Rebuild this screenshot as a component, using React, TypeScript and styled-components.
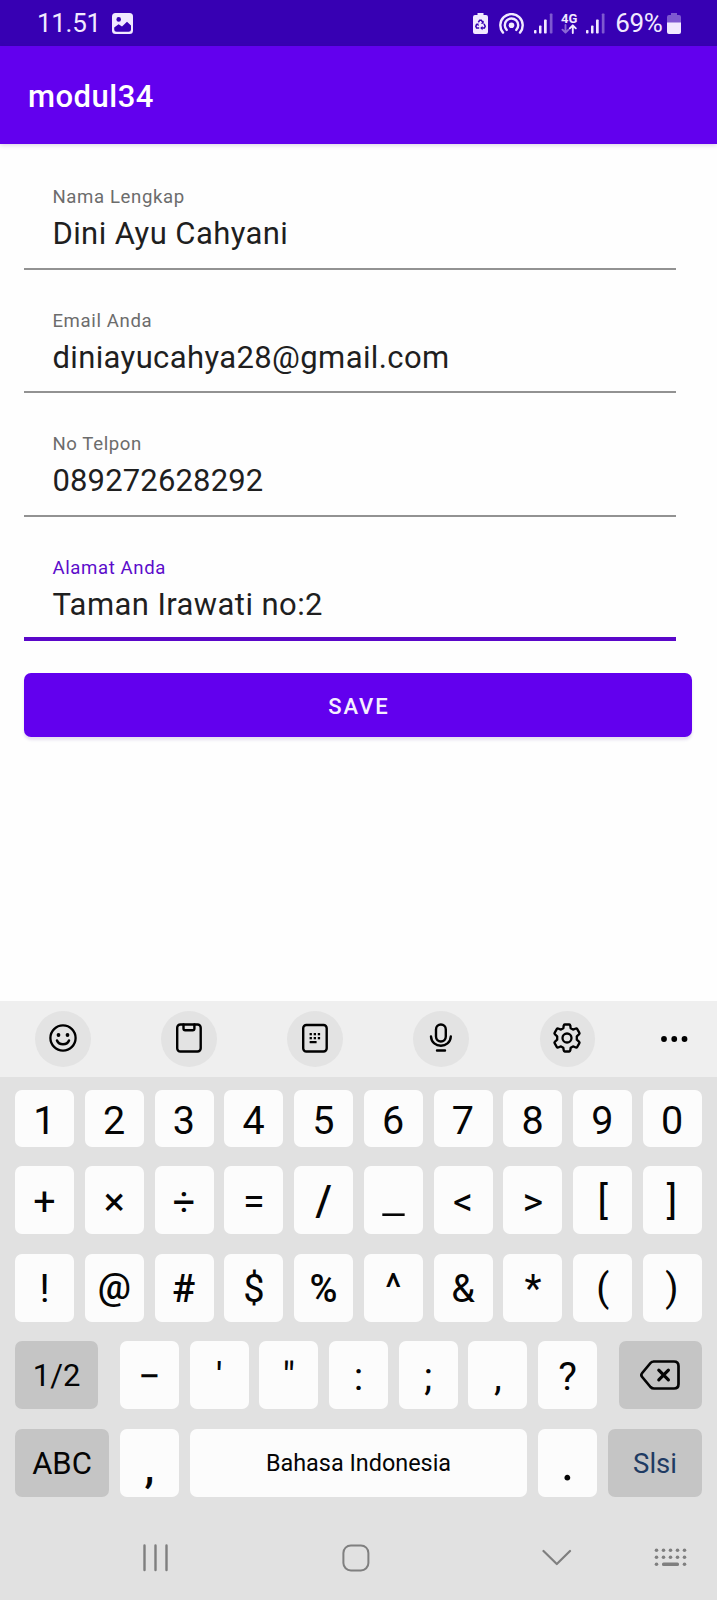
import React from "react";
import styled, { createGlobalStyle } from "styled-components";

const GlobalStyle = createGlobalStyle`
  * { box-sizing: border-box; }
  body { margin: 0; background: #fff; font-family: Roboto, "Liberation Sans", sans-serif; }
`;

const Screen = styled.div`
  width: 717px;
  height: 1600px;
  display: flex;
  flex-direction: column;
  overflow: hidden;
  background: #fefefe;
`;

const StatusBar = styled.header`
  height: 46px;
  flex: none;
  display: flex;
  align-items: center;
  padding: 0 36px 0 37px;
  background: #3700b3;
  color: #f1e9ff;

  svg { display: block; flex: none; }
`;

const StatusText = styled.span<{ $spacing?: number }>`
  font-size: 26px;
  line-height: 46px;
  letter-spacing: ${(p) => p.$spacing ?? 0}px;
  white-space: nowrap;
`;

const StatusIcons = styled.div`
  margin-left: auto;
  display: flex;
  align-items: center;
`;

const Network = styled.div`
  width: 18px;
  margin: 0 8px 0 7px;
  display: flex;
  flex-direction: column;
  align-items: center;
  font-size: 13px;
  font-weight: 700;
  line-height: 11px;
`;

const AppBar = styled.div`
  height: 98px;
  flex: none;
  padding-left: 28px;
  background: #6200ee;
  color: #fff;
  box-shadow: 0 1px 5px rgba(60, 0, 120, 0.2);
  font-size: 31px;
  font-weight: 500;
  line-height: 102px;
  letter-spacing: 0.5px;
`;

const Form = styled.main`
  flex: 1;
  padding: 0 24.4px;
`;

const Field = styled.label<{ $active?: boolean }>`
  display: flex;
  flex-direction: column;
  width: 652px;
  height: 123.4px;
  padding: 42.4px 28px 0;
  position: relative;
  color: ${(p) => (p.$active ? "#5c0ccb" : "#6c6c6c")};

  &::after {
    content: "";
    position: absolute;
    left: 0;
    right: 0;
    top: ${(p) => (p.$active ? 122.8 : 123.8)}px;
    height: ${(p) => (p.$active ? 3.6 : 2)}px;
    background: ${(p) => (p.$active ? "#5a07c9" : "#929292")};
  }
`;

const FieldLabel = styled.span`
  font-size: 18.6px;
  line-height: 22px;
  letter-spacing: 0.62px;
`;

const FieldValue = styled.span<{ $spacing: number }>`
  margin-top: 2px;
  font-size: 31px;
  line-height: 48px;
  letter-spacing: ${(p) => p.$spacing}px;
  color: #1f1f1f;
  white-space: nowrap;
`;

const SaveButton = styled.button`
  display: block;
  width: 668px;
  height: 64px;
  margin-top: 35.4px;
  padding: 3px 0 0 1px;
  border: 0;
  border-radius: 7px;
  background: #6200ee;
  box-shadow: 0 3px 3px rgba(60, 0, 130, 0.12);
  color: #f5eeff;
  font: 500 22px/62px Roboto, sans-serif;
  letter-spacing: 1.9px;
`;

const Keyboard = styled.section`
  flex: none;
  height: 599px;
  background: #e1e1e1;
`;

const Toolbar = styled.div`
  height: 76px;
  display: flex;
  align-items: center;
  padding: 0 29px 1px 35px;
  background: #efefef;
`;

const Tool = styled.span`
  width: 56px;
  height: 56px;
  margin-right: 70.3px;
  padding-bottom: 1px;
  display: grid;
  place-items: center;
  border-radius: 50%;
  background: #e3e3e3;
`;

const Keys = styled.div`
  padding: 13px 15px 0;
  display: flex;
  flex-direction: column;
  gap: 19.6px;
`;

const KeyRow = styled.div<{ $short?: boolean }>`
  display: flex;
  justify-content: space-between;
  height: ${(p) => (p.$short ? 56.6 : 68)}px;
`;

const KeyGroup = styled.div`
  display: flex;
  gap: 10.6px;
`;

const Key = styled.span<{ $w?: number; $dark?: boolean; $size?: number; $drop?: number; $shift?: number; $weight?: number }>`
  width: ${(p) => p.$w ?? 59.1}px;
  height: 100%;
  display: flex;
  align-items: center;
  justify-content: center;
  padding-top: ${(p) => Math.max(0, (p.$drop ?? 1.5) * 2)}px;
  padding-bottom: ${(p) => Math.max(0, -(p.$drop ?? 1.5) * 2)}px;
  padding-left: ${(p) => Math.max(0, (p.$shift ?? 0) * 2)}px;
  padding-right: ${(p) => Math.max(0, -(p.$shift ?? 0) * 2)}px;
  border-radius: 7px;
  background: ${(p) => (p.$dark ? "#c5c5c5" : "#fcfcfc")};
  color: #050505;
  font-size: ${(p) => p.$size ?? 39.5}px;
  font-weight: ${(p) => p.$weight ?? 400};
  line-height: 40px;
  white-space: nowrap;
`;

const EnterKey = styled(Key)`
  color: #1f3b63;
`;

const NavBar = styled.nav`
  height: 104px;
  display: flex;
  align-items: center;
  padding: 17.5px 0 0 143px;
  color: #7f7f7f;
`;

const NavItem = styled.span<{ $gap?: number }>`
  display: block;
  margin-left: ${(p) => p.$gap ?? 0}px;
  svg { display: block; }
`;

const line = { fill: "none", stroke: "currentColor", strokeLinecap: "round", strokeLinejoin: "round" } as const;

const Signal = () => (
  <svg width="19" height="21" viewBox="0 0 19 21" fill="currentColor">
    <rect x="0" y="17" width="2.5" height="3.5" rx=".8" />
    <rect x="5" y="12.5" width="2.5" height="8" rx=".8" />
    <rect x="10" y="6.5" width="2.7" height="14" rx=".8" />
    <rect x="15.8" y="0.5" width="2.7" height="20" rx=".8" opacity=".38" />
  </svg>
);

type Cap = { t: string; size?: number; drop?: number; shift?: number; weight?: number };

const digits: Cap[] = "1234567890".split("").map((t) => ({ t, drop: 2.5, shift: -0.3 }));
const symbolsTop: Cap[] = [
  { t: "+" },
  { t: "×" },
  { t: "÷" },
  { t: "=" },
  { t: "/", size: 42, weight: 500, drop: 0.5 },
  { t: "_", size: 52, drop: -4, weight: 300 },
  { t: "<" },
  { t: ">" },
  { t: "[", drop: 1 },
  { t: "]", drop: 1, shift: -0.5 },
];
const symbolsMid: Cap[] = [
  { t: "!" },
  { t: "@", size: 37, drop: -1, weight: 500 },
  { t: "#", weight: 500, shift: -0.5, size: 38.5 },
  { t: "$", size: 38, drop: 1 },
  { t: "%", size: 38, drop: 1.5, weight: 500 },
  { t: "^", drop: 0.5 },
  { t: "&", size: 38, drop: 1.5 },
  { t: "*" },
  { t: "(", size: 38, drop: 0 },
  { t: ")", size: 38, drop: 0, shift: -0.5 },
];
const punctuation: Cap[] = [{ t: "−" }, { t: "'" }, { t: '"' }, { t: ":" }, { t: ";" }, { t: "," }, { t: "?" }];

const Caps = ({ items }: { items: Cap[] }) => (
  <>
    {items.map((c) => (
      <Key key={c.t} $size={c.size} $drop={c.drop} $shift={c.shift} $weight={c.weight}>{c.t}</Key>
    ))}
  </>
);

const fields = [
  { label: "Nama Lengkap", value: "Dini Ayu Cahyani", spacing: 0.42 },
  { label: "Email Anda", value: "diniayucahya28@gmail.com", spacing: 0.38 },
  { label: "No Telpon", value: "089272628292", spacing: 0.16 },
  { label: "Alamat Anda", value: "Taman Irawati no:2", spacing: 0.42, active: true },
];

export default function App() {
  return (
    <Screen>
      <GlobalStyle />
      <StatusBar>
        <StatusText $spacing={-0.3}>11.51</StatusText>
        <svg width="21" height="21" viewBox="0 0 21 21" style={{ marginLeft: 11 }}>
          <rect width="21" height="21" rx="3.5" fill="currentColor" />
          <circle cx="6.7" cy="6.4" r="2.3" fill="#3700b3" />
          <path d="M2.2 14.6 6.6 11.2 10 13.6 15 8.8 19 12.6V16.5Q19 18.8 16.6 18.8H4.6Q2.2 18.8 2.2 16.5Z" fill="#3700b3" />
        </svg>
        <StatusIcons>
          <svg width="15" height="21" viewBox="0 0 15 21">
            <path d="M4.5 0h6v2H13a2 2 0 0 1 2 2v15a2 2 0 0 1-2 2H2a2 2 0 0 1-2-2V4a2 2 0 0 1 2-2h2.5Z" fill="currentColor" />
            <g fill="none" stroke="#3700b3" strokeWidth="1.5">
              <path d="M5.3 9.2 6.7 7.2H8.3L9.8 9.2M11 10.8l1.2 2.4-.8 1.9H9M6.2 15.1H3.6l-.8-1.9L4 10.8" />
            </g>
            <path d="M10.7 7.5v3.2H7.8ZM9.5 13v4.2l-2.3-2.1ZM2.3 11.2l3-.9.6 2.8Z" fill="#3700b3" />
          </svg>
          <svg width="25" height="21" viewBox="0 0 25 21" style={{ margin: "0 10.5px 0 11px" }}>
            <circle cx="12.5" cy="12.2" r="2.8" fill="currentColor" />
            <g {...line} strokeWidth="2.4">
              <path d="M4 19.6a11.2 11.2 0 1 1 17 0" />
              <path d="M7.7 16.9a6.7 6.7 0 1 1 9.6 0" />
            </g>
          </svg>
          <Signal />
          <Network>
            4G
            <svg width="16" height="10" viewBox="0 0 16 10">
              <g {...line} strokeWidth="1.9">
                <path d="M4.5 1v7.5M1.5 5.7l3 3 3-3" opacity=".45" />
                <path d="M11.8 9V1.5M8.8 4.3l3-3 3 3" />
              </g>
            </svg>
          </Network>
          <Signal />
          <StatusText $spacing={-0.35} style={{ marginLeft: 10 }}>69%</StatusText>
          <svg width="14" height="21" viewBox="0 0 14 21" style={{ marginLeft: 4.5 }}>
            <path d="M4 0h6v2h2a2 2 0 0 1 2 2v6H0V4a2 2 0 0 1 2-2h2Z" fill="currentColor" opacity=".38" />
            <path d="M0 9.5h14V19a2 2 0 0 1-2 2H2a2 2 0 0 1-2-2Z" fill="currentColor" />
          </svg>
        </StatusIcons>
      </StatusBar>
      <AppBar>modul34</AppBar>
      <Form>
        {fields.map((f) => (
          <Field key={f.label} $active={f.active}>
            <FieldLabel>{f.label}</FieldLabel>
            <FieldValue $spacing={f.spacing}>{f.value}</FieldValue>
          </Field>
        ))}
        <SaveButton>SAVE</SaveButton>
      </Form>
      <Keyboard>
        <Toolbar>
          <Tool>
            <svg width="28" height="28" viewBox="0 0 28 28" {...line} strokeWidth="2.3">
              <circle cx="14" cy="14" r="12.6" />
              <path d="M8 16.5c2 5 10 5 12 0" strokeWidth="2.5" />
              <g fill="currentColor" stroke="none"><circle cx="9.5" cy="11" r="1.9" /><circle cx="18.5" cy="11" r="1.9" /></g>
            </svg>
          </Tool>
          <Tool>
            <svg width="28" height="30" viewBox="0 0 28 30" {...line} strokeWidth="2.4">
              <rect x="2.2" y="1.5" width="23.5" height="27" rx="3.2" />
              <path d="M8.500 1.500v4.100q0 1.700 1.700 1.700h7.500q1.700 0 1.700-1.700V1.500" />
            </svg>
          </Tool>
          <Tool>
            <svg width="28" height="30" viewBox="0 0 28 30" {...line} strokeWidth="2.4">
              <rect x="2.2" y="2" width="23.5" height="26.5" rx="3.2" />
              <g fill="currentColor" stroke="none">
                {[8.6, 12.7, 16.8].map((x) => [10, 14].map((y) => <rect key={`${x}-${y}`} x={x} y={y} width="2.3" height="2.3" />))}
                <rect x="8.6" y="18" width="7" height="2.2" rx=".5" />
              </g>
            </svg>
          </Tool>
          <Tool>
            <svg width="28" height="30" viewBox="0 0 28 30" {...line} strokeWidth="2.4">
              <rect x="9" y="1.5" width="9.8" height="17" rx="4.9" />
              <path d="M4 13.500c.6 12.300 19.200 12.300 19.800 0M10 27.500h8" />
            </svg>
          </Tool>
          <Tool>
            <svg width="30" height="30" viewBox="0 0 30 30" {...line} strokeWidth="2.3">
              <circle cx="15" cy="15" r="4.500" />
              <path d="M12.7 1.5h4.6q.8 0 .9.8l.5 3 2.3 1.3 2.9-1.1q.8-.3 1.2.4l2.3 4q.4.7-.2 1.2L24.800 13.300v3.400l2.4 2.2q.6.5.2 1.2l-2.3 4q-.4.7-1.2.4L21 23.400l-2.3 1.3-.5 3q-.1.8-.9.8h-4.6q-.8 0-.9-.8l-.5-3L9 23.400l-2.9 1.100q-.8.3-1.2-.4l-2.3-4q-.4-.7.2-1.2l2.4-2.2v-3.400L2.800 11.100q-.6-.5-.2-1.2l2.3-4q.4-.7 1.2-.4L9 6.600l2.3-1.3.5-3q.1-.8.9-.8Z" />
            </svg>
          </Tool>
          <svg width="28" height="8" viewBox="0 0 28 8" style={{ marginTop: 1.5, marginLeft: -5.5 }}>
            <circle cx="4" cy="4" r="2.9" /><circle cx="14.3" cy="4" r="2.9" /><circle cx="24.6" cy="4" r="2.9" />
          </svg>
        </Toolbar>
        <Keys>
          <KeyRow $short><Caps items={digits} /></KeyRow>
          <KeyRow><Caps items={symbolsTop} /></KeyRow>
          <KeyRow><Caps items={symbolsMid} /></KeyRow>
          <KeyRow>
            <Key $w={83.3} $dark $size={31} $drop={1}>1/2</Key>
            <KeyGroup><Caps items={punctuation} /></KeyGroup>
            <Key $w={83.3} $dark $drop={-0.5}>
              <svg width="40" height="30" viewBox="0 0 40 30" {...line} strokeWidth="2.7">
                <path d="M13.500 1.500H34q4.500 0 4.500 4.500v18q0 4.500-4.500 4.500H14q-2 0-3.500-1.500L2.200 17q-1.700-2 0-4L10.500 3q1.200-1.500 3.500-1.500Z" />
                <path d="m18.800 10.200 9.600 9.600M28.400 10.200l-9.600 9.600" strokeWidth="3.2" />
              </svg>
            </Key>
          </KeyRow>
          <KeyRow>
            <Key $w={94} $dark $size={31} $drop={1}>ABC</Key>
            <Key $size={44} $weight={500} $drop={4}>,</Key>
            <Key $w={337.5} $size={23.4} $drop={0.5}>Bahasa Indonesia</Key>
            <Key $size={52} $drop={0}>.</Key>
            <EnterKey $w={94} $dark $size={27.5} $drop={1}>Slsi</EnterKey>
          </KeyRow>
        </Keys>
        <NavBar>
          <NavItem>
            <svg width="26" height="28" viewBox="0 0 26 28" {...line} strokeWidth="2.4"><path d="M1.500 1.500v24.500M12.500 1.500v24.500M23.500 1.500v24.500" /></svg>
          </NavItem>
          <NavItem $gap={173}>
            <svg width="28" height="28" viewBox="0 0 28 28" {...line} strokeWidth="2"><rect x="1.4" y="1.4" width="25" height="25" rx="7.5" /></svg>
          </NavItem>
          <NavItem $gap={172}>
            <svg width="30" height="18" viewBox="0 0 30 18" {...line} strokeWidth="2.2"><path d="m1.500 2 13.300 13L28 2" /></svg>
          </NavItem>
          <NavItem $gap={82}>
            <svg width="34" height="20" viewBox="0 0 34 20" fill="currentColor">
              {[2.5, 9.5, 16.5, 23.5, 30.5].map((x) => [2.2, 9.2].map((y) => <circle key={`${x}-${y}`} cx={x} cy={y} r="1.8" />))}
              <circle cx="2.5" cy="16.2" r="1.8" /><circle cx="30.5" cy="16.2" r="1.8" />
              <rect x="8" y="14.4" width="17" height="3.7" rx="1.5" />
            </svg>
          </NavItem>
        </NavBar>
      </Keyboard>
    </Screen>
  );
}
